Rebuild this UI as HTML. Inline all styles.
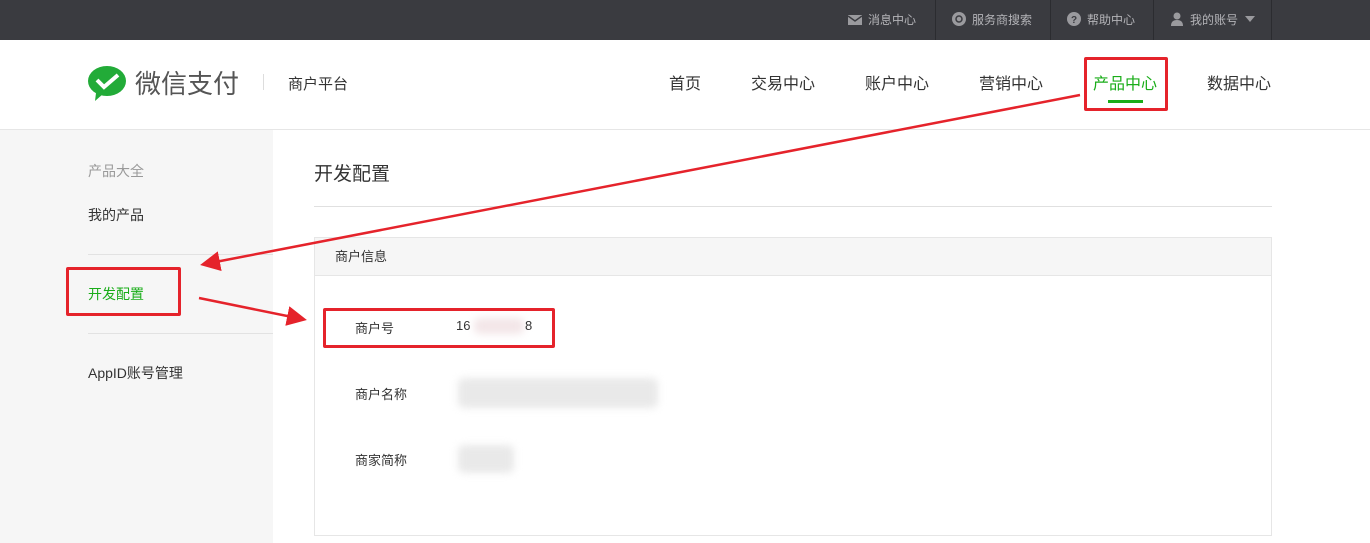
<!DOCTYPE html>
<html><head><meta charset="utf-8"><style>
*{margin:0;padding:0;box-sizing:border-box}
body{width:1370px;height:543px;overflow:hidden;background:#fff;font-family:"Liberation Sans","Noto Sans CJK SC",sans-serif;position:relative}
.top{position:absolute;left:0;top:0;width:1370px;height:40px;background:#3a3b40}
.ti{position:absolute;top:0;height:40px;line-height:40px;color:#b4b4b8;font-size:12px;border-left:1px solid #2b2c30}
.hdr{position:absolute;top:40px;left:0;width:1370px;height:90px;border-bottom:1px solid #e6e6e6;background:#fff}
.nav{position:absolute;top:70px;font-size:16px;color:#333}
.side{position:absolute;left:0;top:130px;width:273px;height:413px;background:#f6f6f6}
.s{position:absolute;left:88px;font-size:14px;color:#333}
.red{position:absolute;border:3px solid #e5232b;border-radius:2px}
.lbl{position:absolute;left:355px;font-size:13px;color:#333}
.blur{position:absolute;background:#e9e9e9;filter:blur(4px);border-radius:6px}
</style></head><body>
<div class="top">
<div class="ti" style="left:836px;width:100px;border-left:none;padding-left:12px"><svg width="14" height="10" style="vertical-align:-1px;margin-right:6px"><rect width="14" height="10" fill="#9a9a9e"/><path d="M0 1 L7 6 L14 1" stroke="#3a3b40" stroke-width="1.5" fill="none"/></svg>消息中心</div>
<div class="ti" style="left:935px;width:116px;padding-left:16px"><svg width="14" height="14" style="vertical-align:-2px;margin-right:6px"><circle cx="7" cy="7" r="7" fill="#9a9a9e"/><circle cx="7" cy="7" r="3" stroke="#3a3b40" stroke-width="1.5" fill="none"/></svg>服务商搜索</div>
<div class="ti" style="left:1050px;width:104px;padding-left:16px"><svg width="14" height="14" style="vertical-align:-2px;margin-right:6px"><circle cx="7" cy="7" r="7" fill="#9a9a9e"/><text x="7" y="11" font-size="10" font-weight="bold" text-anchor="middle" fill="#3a3b40">?</text></svg>帮助中心</div>
<div class="ti" style="left:1153px;width:119px;padding-left:16px;border-right:1px solid #2b2c30"><svg width="14" height="14" style="vertical-align:-2px;margin-right:6px"><circle cx="7" cy="4" r="3.5" fill="#9a9a9e"/><path d="M1 14 Q1 8 7 8 Q13 8 13 14Z" fill="#9a9a9e"/></svg>我的账号 <span style="display:inline-block;border:5px solid transparent;border-top:6px solid #9a9a9e;vertical-align:-3px;margin-left:4px"></span></div>
</div>
<div class="hdr">
<svg style="position:absolute;left:88px;top:26px" width="40" height="36"><ellipse cx="19" cy="15" rx="19" ry="15" fill="#22ab38"/><path d="M8 27 L7 35 L15 28Z" fill="#22ab38"/><path d="M9 14 L16 21 L30 9" stroke="#fff" stroke-width="4" fill="none"/></svg>
<div style="position:absolute;left:135px;top:24px;font-size:26px;color:#555">微信支付</div>
<div style="position:absolute;left:263px;top:34px;width:1px;height:16px;background:#ddd"></div>
<div style="position:absolute;left:288px;top:33px;font-size:15px;color:#333">商户平台</div>
</div>
<div class="nav" style="left:669px">首页</div>
<div class="nav" style="left:751px">交易中心</div>
<div class="nav" style="left:865px">账户中心</div>
<div class="nav" style="left:979px">营销中心</div>
<div class="nav" style="left:1093px;color:#1aad19">产品中心</div>
<div style="position:absolute;left:1108px;top:100px;width:35px;height:3px;background:#1aad19"></div>
<div class="nav" style="left:1207px">数据中心</div>
<div class="side"></div>
<div class="s" style="top:161px;color:#999">产品大全</div>
<div class="s" style="top:205px">我的产品</div>
<div style="position:absolute;left:88px;top:254px;width:185px;height:1px;background:#e2e2e2"></div>
<div class="s" style="top:284px;color:#1aad19">开发配置</div>
<div style="position:absolute;left:88px;top:333px;width:185px;height:1px;background:#e2e2e2"></div>
<div class="s" style="top:363px">AppID账号管理</div>
<div style="position:absolute;left:314px;top:159px;font-size:19px;color:#333">开发配置</div>
<div style="position:absolute;left:314px;top:206px;width:958px;height:1px;background:#e0e0e0"></div>
<div style="position:absolute;left:314px;top:237px;width:958px;height:299px;border:1px solid #e6e6e6"></div>
<div style="position:absolute;left:315px;top:238px;width:956px;height:38px;background:#f6f6f6;border-bottom:1px solid #e6e6e6;font-size:13px;color:#333;line-height:38px;padding-left:20px">商户信息</div>
<div class="lbl" style="top:318px">商户号</div>
<div style="position:absolute;left:456px;top:318px;font-size:13px;color:#333">16</div>
<div class="blur" style="left:474px;top:318px;width:50px;height:16px;background:#f3e6e8"></div>
<div style="position:absolute;left:525px;top:318px;font-size:13px;color:#333">8</div>
<div class="lbl" style="top:384px">商户名称</div>
<div class="blur" style="left:458px;top:378px;width:200px;height:30px"></div>
<div class="lbl" style="top:450px">商家简称</div>
<div class="blur" style="left:458px;top:445px;width:56px;height:28px"></div>
<div class="red" style="left:1084px;top:57px;width:84px;height:54px"></div>
<div class="red" style="left:66px;top:267px;width:115px;height:49px"></div>
<div class="red" style="left:323px;top:308px;width:232px;height:40px"></div>
<svg style="position:absolute;left:0;top:0" width="1370" height="543">
<defs><marker id="a" markerWidth="8" markerHeight="8" refX="6" refY="4" orient="auto"><path d="M0 0 L8 4 L0 8Z" fill="#e5232b"/></marker></defs>
<line x1="1080" y1="95" x2="205" y2="264" stroke="#e5232b" stroke-width="2.5" marker-end="url(#a)"/>
<line x1="199" y1="298" x2="302" y2="319" stroke="#e5232b" stroke-width="2.5" marker-end="url(#a)"/>
</svg>
</body></html>
